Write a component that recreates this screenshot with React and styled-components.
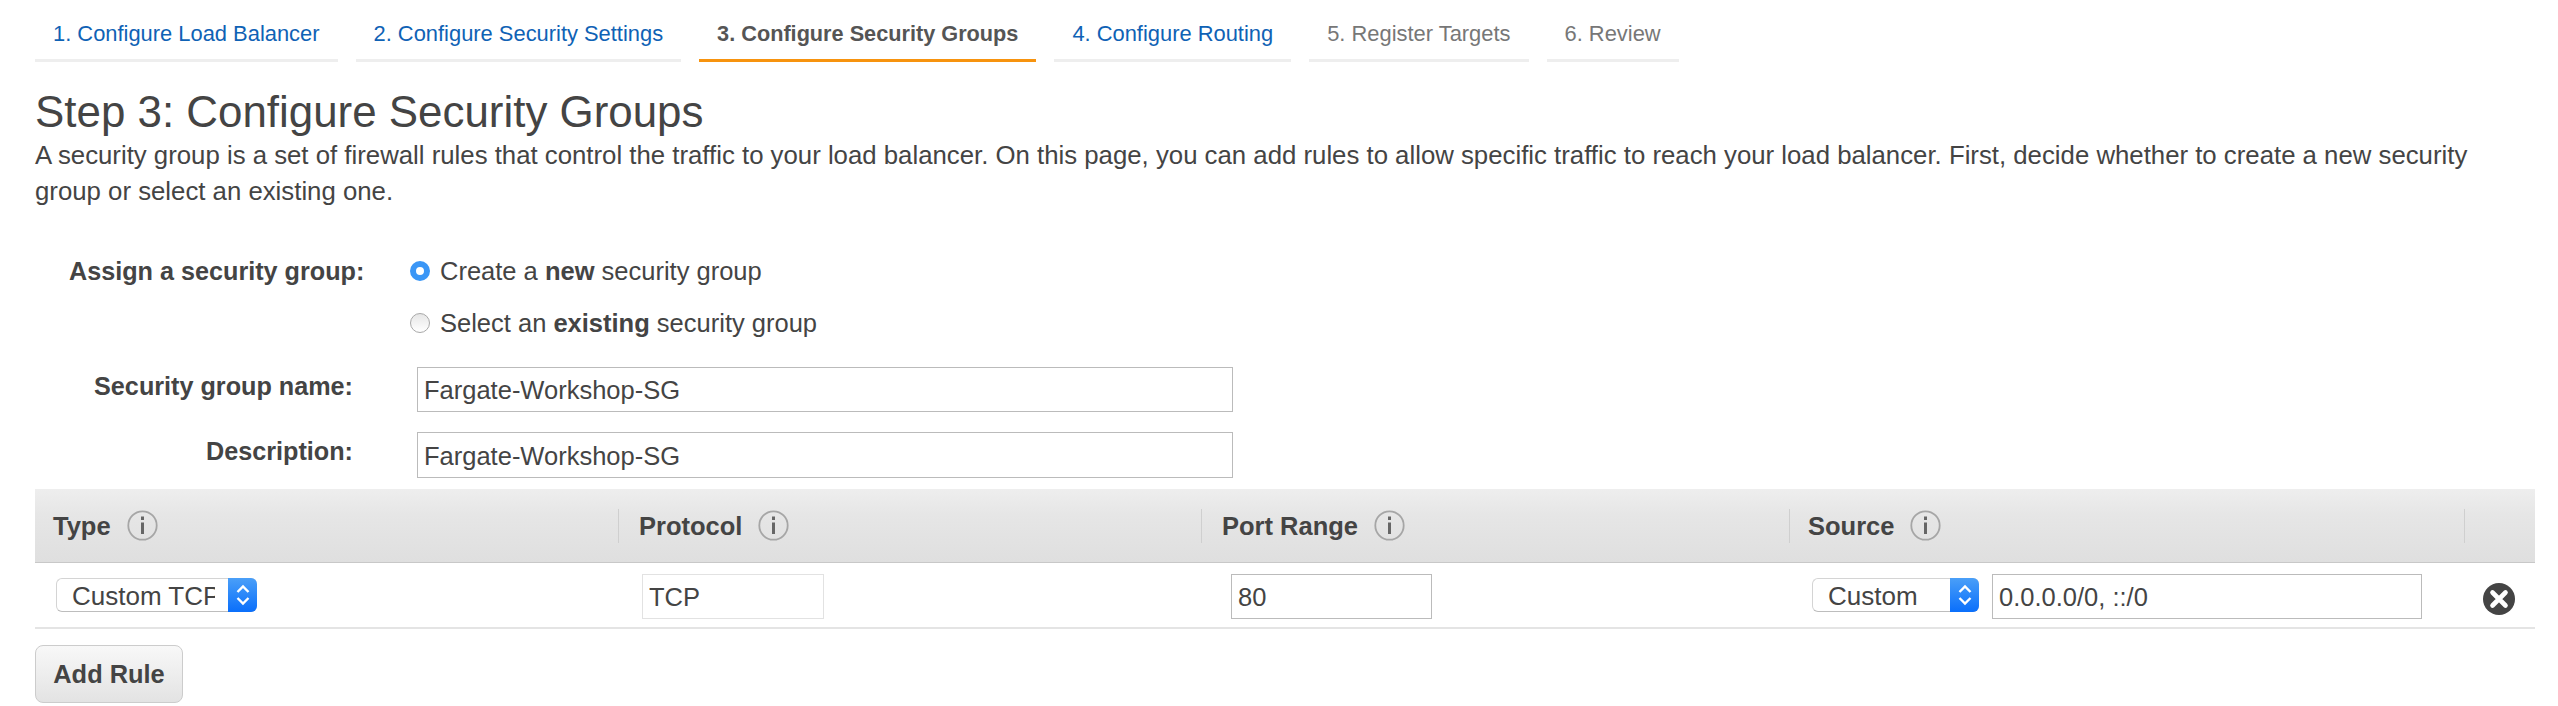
import styled, { createGlobalStyle } from "styled-components";

const GlobalStyle = createGlobalStyle`
  body {
    margin: 0;
    background: #fff;
    color: #444;
    font-family: "Liberation Sans", Arial, sans-serif;
    font-size: 25.5px;
  }
`;

const Page = styled.div`
  padding: 0 23px 0 35px;
`;

const Tabs = styled.div`
  display: flex;
  gap: 18px;
  height: 62px;
`;

const Tab = styled.div`
  display: flex;
  align-items: center;
  padding: 8px 18px 0;
  height: 62px;
  box-sizing: border-box;
  font-size: ${(props) => (props.$state === "active" ? 21.7 : 21.9)}px;
  font-weight: ${(props) => (props.$state === "active" ? "bold" : "normal")};
  color: ${(props) =>
    props.$state === "link" ? "#0f62b5" : props.$state === "active" ? "#555" : "#777"};
  border-bottom: 3px solid
    ${(props) => (props.$state === "active" ? "#f7930e" : "#eee")};
`;

const Heading = styled.h1`
  margin: 25px 0 0;
  font-size: 43.9px;
  line-height: 50px;
  font-weight: normal;
  color: #444;
`;

const Intro = styled.p`
  margin: 0;
  font-size: 25.77px;
  line-height: 36px;
`;

const Form = styled.div`
  margin-top: 47px;
`;

const AssignRow = styled.div`
  display: flex;
  padding-left: 34px;
`;

const Label = styled.div`
  width: ${(props) => props.$width}px;
  text-align: right;
  font-weight: bold;
  font-size: 25.2px;
  line-height: 30px;
  flex-shrink: 0;
  white-space: nowrap;
`;

const Options = styled.div`
  margin-left: 48px;
  display: flex;
  flex-direction: column;
  gap: 22px;
`;

const Option = styled.div`
  display: flex;
  align-items: center;
  gap: 10px;
  height: 30px;
  font-size: 25.5px;
`;

const Radio = styled.span`
  box-sizing: border-box;
  width: 20px;
  height: 20px;
  border-radius: 50%;
  background: ${(props) =>
    props.$checked ? "#fff" : "linear-gradient(#e6e6e6, #fff)"};
  border: ${(props) => (props.$checked ? "6px solid #3a96f6" : "1px solid #a8a8a8")};
`;

const FieldRow = styled.div`
  display: flex;
  gap: 64px;
  margin-top: ${(props) => props.$top}px;
`;

const FieldLabel = styled(Label)`
  width: 318px;
  padding-top: 4px;
`;

const TextInput = styled.input`
  box-sizing: border-box;
  display: block;
  height: ${(props) => props.$height || 45}px;
  width: ${(props) => props.$width}px;
  margin-left: ${(props) => props.$left || 0}px;
  padding: 2px 6px 0;
  border: 1px solid ${(props) => (props.$light ? "#e2e2e2" : "#bbb")};
  border-radius: 0;
  outline: none;
  background: #fff;
  color: #444;
  font-family: inherit;
  font-size: 25.5px;
`;

const Grid = styled.div`
  display: grid;
  grid-template-columns: 583px 583px 588px 675px 71px;
`;

const HeaderRow = styled(Grid)`
  margin-top: 11px;
  height: 74px;
  box-sizing: border-box;
  align-items: center;
  background: linear-gradient(#eeeeee, #e6e6e6 35%, #dfdfdf);
  border-bottom: 1px solid #c8c8c8;
`;

const HeaderCell = styled.div`
  display: flex;
  align-items: center;
  height: 34px;
  gap: 16px;
  padding-left: ${(props) => props.$pad}px;
  border-left: ${(props) => (props.$first ? "none" : "1px solid #cfcfcf")};
  font-weight: bold;
  font-size: 25.5px;
`;

const HeaderName = styled.span`
  padding-top: 2px;
`;

const BodyRow = styled(Grid)`
  height: 66px;
  box-sizing: border-box;
  border-bottom: 2px solid #e4e4e4;
  align-items: start;
`;

const BodyCell = styled.div`
  display: flex;
  padding-top: 11px;
  padding-left: ${(props) => props.$left}px;
`;

const SelectBox = styled.div`
  box-sizing: border-box;
  display: flex;
  height: 34px;
  margin-top: 4px;
  width: ${(props) => props.$width}px;
  border: 1px solid #d4d4d4;
  border-right: none;
  border-bottom-color: #bdbdbd;
  border-radius: 6px;
  background: #fff;
  font-size: 26px;
  line-height: 34px;
`;

const SelectValue = styled.div`
  flex: 1;
  margin: 0 13px 0 15px;
  overflow: hidden;
  white-space: nowrap;
`;

const SelectArrow = styled.div`
  width: 29px;
  flex-shrink: 0;
  margin: -1px 0 -1px;
  border-radius: 0 6px 6px 0;
  background: linear-gradient(#4a9ff8, #0a6ffb);
  display: flex;
  align-items: center;
  justify-content: center;
`;

const CloseCell = styled.div`
  display: flex;
  padding: 20px 0 0 19px;
`;

const AddRule = styled.button`
  display: block;
  margin-top: 16px;
  box-sizing: border-box;
  width: 148px;
  height: 58px;
  padding: 0;
  border: 1px solid #ccc;
  border-radius: 8px;
  background: linear-gradient(#f8f8f8, #e3e3e3);
  color: #444;
  font-family: inherit;
  font-weight: bold;
  font-size: 25.4px;
`;

const InfoIcon = () => (
  <svg width="31" height="31" viewBox="0 0 31 31">
    <circle cx="15.5" cy="15.5" r="14.2" fill="none" stroke="#a6a6a6" strokeWidth="1.8" />
    <rect x="14" y="6.5" width="3" height="3.5" fill="#666" />
    <rect x="14" y="12.5" width="3" height="11.5" fill="#666" />
  </svg>
);

const Chevrons = () => (
  <svg width="16" height="24" viewBox="0 0 16 24" fill="none" stroke="#fff" strokeWidth="2.4">
    <path d="M2.5 9 8 3.5 13.5 9" />
    <path d="M2.5 15 8 20.5 13.5 15" />
  </svg>
);

const CloseIcon = () => (
  <svg width="32" height="32" viewBox="0 0 32 32">
    <circle cx="16" cy="16" r="16" fill="#444" />
    <path d="M9.5 9.5 22.5 22.5M22.5 9.5 9.5 22.5" stroke="#fff" strokeWidth="4.6" strokeLinecap="round" />
  </svg>
);

const tabs = [
  { label: "1. Configure Load Balancer", state: "link" },
  { label: "2. Configure Security Settings", state: "link" },
  { label: "3. Configure Security Groups", state: "active" },
  { label: "4. Configure Routing", state: "link" },
  { label: "5. Register Targets", state: "off" },
  { label: "6. Review", state: "off" },
];

const columns = [
  { name: "Type", pad: 18 },
  { name: "Protocol", pad: 20 },
  { name: "Port Range", pad: 20 },
  { name: "Source", pad: 18 },
];

export default function App() {
  return (
    <Page>
      <GlobalStyle />
      <Tabs>
        {tabs.map((tab) => (
          <Tab key={tab.label} $state={tab.state}>
            {tab.label}
          </Tab>
        ))}
      </Tabs>

      <Heading>Step 3: Configure Security Groups</Heading>
      <Intro>
        A security group is a set of firewall rules that control the traffic to your load
        balancer. On this page, you can add rules to allow specific traffic to reach your load
        balancer. First, decide whether to create a new security group or select an existing one.
      </Intro>

      <Form>
        <AssignRow>
          <Label $width={293}>Assign a security group:</Label>
          <Options>
            <Option>
              <Radio $checked />
              <span>
                Create a <b>new</b> security group
              </span>
            </Option>
            <Option>
              <Radio />
              <span>
                Select an <b>existing</b> security group
              </span>
            </Option>
          </Options>
        </AssignRow>
        <FieldRow $top={29}>
          <FieldLabel>Security group name:</FieldLabel>
          <TextInput $width={816} readOnly value="Fargate-Workshop-SG" />
        </FieldRow>
        <FieldRow $top={20}>
          <FieldLabel>Description:</FieldLabel>
          <TextInput $width={816} $height={46} readOnly value="Fargate-Workshop-SG" />
        </FieldRow>
      </Form>

      <HeaderRow>
        {columns.map((col, i) => (
          <HeaderCell key={col.name} $first={i === 0} $pad={col.pad}>
            <HeaderName>{col.name}</HeaderName>
            <InfoIcon />
          </HeaderCell>
        ))}
        <HeaderCell />
      </HeaderRow>

      <BodyRow>
        <BodyCell $left={21}>
          <SelectBox $width={201}>
            <SelectValue>Custom TCP</SelectValue>
            <SelectArrow>
              <Chevrons />
            </SelectArrow>
          </SelectBox>
        </BodyCell>
        <BodyCell $left={24}>
          <TextInput $width={182} $light readOnly value="TCP" />
        </BodyCell>
        <BodyCell $left={30}>
          <TextInput $width={201} readOnly value="80" />
        </BodyCell>
        <BodyCell $left={23}>
          <SelectBox $width={167}>
            <SelectValue>Custom</SelectValue>
            <SelectArrow>
              <Chevrons />
            </SelectArrow>
          </SelectBox>
          <TextInput $width={430} $left={13} readOnly value="0.0.0.0/0, ::/0" />
        </BodyCell>
        <CloseCell>
          <CloseIcon />
        </CloseCell>
      </BodyRow>

      <AddRule>Add Rule</AddRule>
    </Page>
  );
}
